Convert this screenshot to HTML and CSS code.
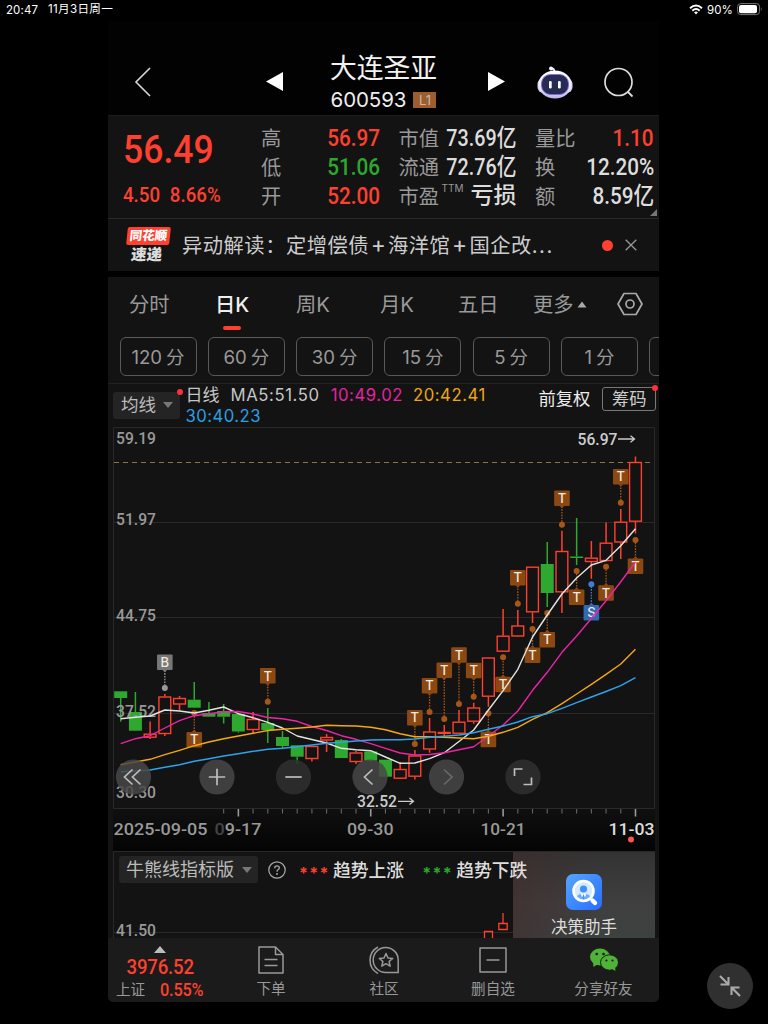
FILE: index.html
```html
<!DOCTYPE html>
<html lang="zh-CN">
<head>
<meta charset="utf-8">
<title>大连圣亚 600593</title>
<link rel="stylesheet" href="styles.css">
</head>
<body>
<div class="status">
  <span class="status-time">20:47</span><span class="status-date">11月3日周一</span>
  <svg class="wifi" width="14" height="11" viewBox="0 0 14 11"><path d="M1 4.2Q7-1.2 13 4.2M3.3 6.7Q7 3.4 10.7 6.7" fill="none" stroke="#fff" stroke-width="1.9"/><path d="M5 8.3Q7 6.8 9 8.3L7 10.5Z" fill="#fff"/></svg>
  <span class="status-pct">90%</span>
  <svg width="26" height="13" viewBox="0 0 26 13"><rect x=".6" y=".6" width="22" height="11" rx="3.2" fill="none" stroke="#777"/><rect x="2" y="2" width="18" height="8.2" rx="2" fill="#fff"/><path d="M24 4.2Q25.6 6.2 24 8.2Z" fill="#777"/></svg>
</div>
<main class="phone">
  <header class="head">
    <svg class="back" width="18" height="30" viewBox="0 0 18 30"><path d="M16 1L2 15L16 29" fill="none" stroke="#d8d8d8" stroke-width="1.6"/></svg>
    <svg class="prev" width="17" height="19" viewBox="0 0 17 19"><path d="M17 0V19L0 9.5Z" fill="#fff"/></svg>
    <div class="title"><h1>大连圣亚</h1><div class="code">600593<span class="badge">L1</span></div></div>
    <svg class="next" width="17" height="19" viewBox="0 0 17 19"><path d="M0 0V19L17 9.5Z" fill="#fff"/></svg>
    <svg class="robot" width="36" height="34" viewBox="0 0 36 34">
      <defs><linearGradient id="rb" x2="0" y2="1"><stop stop-color="#fff"/><stop offset=".65" stop-color="#e5e3f7"/><stop offset="1" stop-color="#b8b5e8"/></linearGradient></defs>
      <path d="M17 6Q18 2.5 14.5 2.5" fill="none" stroke="#ececf7" stroke-width="1.8"/><circle cx="14" cy="2.4" r="2" fill="#f4f4fb"/>
      <rect x=".5" y="12" width="35" height="15" rx="6" fill="#d9d8f2"/><ellipse cx="18" cy="18.500" rx="16.5" ry="14" fill="url(#rb)"/>
      <rect x="4.500" y="8.500" width="27" height="20" rx="9" fill="#252b55" stroke="#8668d8" stroke-width=".9"/>
      <rect x="12" y="15" width="2.7" height="7.500" rx="1.3" fill="#fff"/><rect x="21" y="15" width="2.7" height="7.500" rx="1.3" fill="#fff"/>
    </svg>
    <svg class="search" width="32" height="32" viewBox="0 0 32 32"><circle cx="15.5" cy="15" r="13.5" fill="none" stroke="#ddd" stroke-width="1.7"/><path d="M24.5 24.5L29.5 29.5" stroke="#ddd" stroke-width="1.8"/></svg>
  </header>

  <section class="quote">
    <div class="last red"><div class="price num">56.49</div><div class="change num"><span>4.50</span><span>8.66%</span></div></div>
    <dl class="stats s1">
      <div><dt>高</dt><dd class="num red">56.97</dd></div>
      <div><dt>低</dt><dd class="num green">51.06</dd></div>
      <div><dt>开</dt><dd class="num red">52.00</dd></div>
    </dl>
    <dl class="stats s2">
      <div><dt>市值</dt><dd class="num">73.69亿</dd></div>
      <div><dt>流通</dt><dd class="num">72.76亿</dd></div>
      <div><dt>市盈<sup>TTM</sup></dt><dd class="loss">亏损</dd></div>
    </dl>
    <dl class="stats s3">
      <div><dt>量比</dt><dd class="num red">1.10</dd></div>
      <div><dt>换</dt><dd class="num">12.20%</dd></div>
      <div><dt>额</dt><dd class="num">8.59亿</dd></div>
    </dl>
    <i class="corner"></i>
  </section>

  <section class="news">
    <div class="brand"><b>同花顺</b><em>速递</em></div>
    <p>异动解读：定增偿债<i>+</i>海洋馆<i>+</i>国企改<span>...</span></p>
    <span class="dot"></span>
    <svg width="12" height="12" viewBox="0 0 12 12"><path d="M.7.7L11.3 11.3M11.3.7L.7 11.3" stroke="#999" stroke-width="1.3"/></svg>
  </section>

  <section class="panel">
    <nav class="tabs">
      <span>分时</span><span class="on">日K</span><span>周K</span><span>月K</span><span>五日</span><span class="more">更多<svg width="10" height="7" viewBox="0 0 10 7"><path d="M5 .5L9.5 6.5H.5Z" fill="#aaa"/></svg></span>
      <svg class="hex" width="26" height="24" viewBox="0 0 26 24"><path d="M7 1.5H19L25 12L19 22.500H7L1 12Z" fill="none" stroke="#aaa" stroke-width="1.7" stroke-linejoin="round"/><circle cx="13" cy="12" r="4" fill="none" stroke="#aaa" stroke-width="1.7"/></svg>
    </nav>
    <div class="periods"><span>120<i>分</i></span><span>60<i>分</i></span><span>30<i>分</i></span><span>15<i>分</i></span><span>5<i>分</i></span><span>1<i>分</i></span><span></span></div>
    <div class="ma">
      <div class="select ma-select">均线<i class="caret"></i><i class="pin"></i></div>
      <div class="ma-values"><span class="ma-name">日线</span><span class="m5">MA5:51.50</span><span class="m10">10:49.02</span><span class="m20">20:42.41</span><br><span class="m30">30:40.23</span></div>
      <span class="adj">前复权</span><span class="chips">筹码<i class="pin"></i></span>
    </div>
    <svg id="chart" class="chart" width="551" height="424" viewBox="108 427 551 424"></svg>
    <div class="sub">
      <div class="sub-head">
        <div class="select sub-select">牛熊线指标版<i class="caret"></i></div>
        <svg class="help" width="18" height="18" viewBox="0 0 18 18"><circle cx="9" cy="9" r="8.2" fill="none" stroke="#aaa" stroke-width="1.2"/><path d="M6.7 7.2Q6.700 4.800 9 4.800Q11.300 4.800 11.300 6.800Q11.300 8 10 8.800Q9 9.500 9 10.700" fill="none" stroke="#aaa" stroke-width="1.3"/><circle cx="9" cy="13" r=".9" fill="#aaa"/></svg>
        <span class="stars red">***</span><span class="trend">趋势上涨</span><span class="stars green">***</span><span class="trend t2">趋势下跌</span>
      </div>
      <svg class="sub-chart" width="541" height="86" viewBox="114 852 541 86"><path d="M114 932.500H655" stroke="#292929"/><g fill="none" stroke="#ff402f" stroke-width="1.300"><path d="M503 913V923M498.800 923.500H507.200V929.500H498.800ZM484.500 938V931.500H492.500V938"/></g><text x="116" y="935.5" textLength="40" lengthAdjust="spacingAndGlyphs" class="axis">41.50</text></svg>
      <div class="helper">
        <svg width="36" height="36" viewBox="0 0 36 36"><defs><linearGradient id="hb" x2="1" y2="1"><stop stop-color="#55a5ff"/><stop offset="1" stop-color="#286dff"/></linearGradient><clipPath id="hc"><circle cx="17.500" cy="17" r="8.500"/></clipPath></defs><rect width="36" height="36" rx="7" fill="url(#hb)"/><circle cx="17.500" cy="17" r="10" fill="#d6e9ff" stroke="#fff" stroke-width="2.600"/><circle cx="17.500" cy="15" r="3.600" fill="#3f8fff"/><g clip-path="url(#hc)"><ellipse cx="17.500" cy="24.500" rx="7.500" ry="5" fill="#69adff"/><path d="M14.500 19.500H20.500L17.500 27Z" fill="#fff"/><path d="M17.500 20L19 24L17.500 26L16 24Z" fill="#3f8fff"/></g><path d="M26.500 26.500L29 29" stroke="#fff" stroke-width="4.400" stroke-linecap="round"/></svg>
        <span>决策助手</span>
      </div>
    </div>
  </section>

  <footer class="bar">
    <div class="index"><svg width="12" height="7" viewBox="0 0 12 7"><path d="M6 0L12 7H0Z" fill="#bbb"/></svg><strong class="num red">3976.52</strong><p>上证<b class="num red">0.55%</b></p></div>
    <div class="item order"><svg width="26" height="28" viewBox="0 0 26 28"><path d="M1 1H17.500L25 8.500V27H1ZM17.500 1V8.500H25M6.500 13.500H19.500M6.500 19.500H19.500" fill="none" stroke="#999" stroke-width="1.500" stroke-linejoin="round"/></svg>下单</div>
    <div class="item club"><svg width="30" height="28" viewBox="0 0 30 28"><g fill="none" stroke="#999" stroke-width="1.500"><path d="M17 26.500A12.500 12.500 0 1 1 29.200 14V26.500ZM9 1A15 15 0 0 0 9 27.500"/><path d="M17 7.500L19 12L23.700 12.400L20.100 15.500L21.200 20.200L17 17.700L12.800 20.200L13.900 15.500L10.300 12.400L15 12Z" stroke-linejoin="round"/></g></svg>社区</div>
    <div class="item remove"><svg width="28" height="26" viewBox="0 0 28 26"><path d="M1 1H27V25H1ZM7.500 13H20.500" fill="none" stroke="#999" stroke-width="1.500" stroke-linejoin="round"/></svg>删自选</div>
    <div class="item share"><svg width="28" height="24" viewBox="0 0 28 24"><g fill="#4eb337"><ellipse cx="10" cy="9" rx="10" ry="8.500"/><path d="M3 14L3.500 19L8 16Z"/></g><g fill="#4eb337"><ellipse cx="19.500" cy="14.500" rx="9" ry="7.700" stroke="#1b1b1b"/><path d="M22 21L25.500 23L25 19Z"/></g><g fill="#1b1b1b"><circle cx="6.700" cy="6" r="1.300"/><circle cx="13.500" cy="6" r="1.300"/><circle cx="16.400" cy="12.500" r="1.100"/><circle cx="22.500" cy="12.500" r="1.100"/></g></svg>分享好友</div>
  </footer>
</main>
<div class="shrink"><svg width="24" height="24" viewBox="0 0 24 24"><path d="M2 2L10 10M2.500 10.500H10.500V3M22 22L14 14M21.500 13.500H13.500V21" fill="none" stroke="#aaa" stroke-width="2.100"/></svg></div>
<script src="chart.js"></script>
</body>
</html>
```
FILE: styles.css
```css
* { box-sizing: border-box; }
body { margin: 0; height: 1024px; background: #000; color: #ccc; overflow: hidden; font-family: Inter, "Noto Sans CJK SC", sans-serif; position: relative; }
h1, p, dl, dd { margin: 0; }
i, em { font-style: normal; }
svg { flex: none; display: block; }
span, dt, dd, b { white-space: nowrap; }
.num { font-family: Roboto, "Noto Sans CJK SC", sans-serif; font-weight: 500; }
.red { color: #ff402f !important; }
.green { color: #2da82d !important; }

.status { height: 21px; display: flex; align-items: center; padding: 0 5px 2px 6px; font-size: 11.5px; color: #fff; letter-spacing: .1px; }
.status-date { margin-left: 10px; font-size: 11.6px; letter-spacing: .3px; line-height: 14px; margin-top: -1px; }
.wifi { margin-left: auto; }
.status-pct { margin: 0 4px 0 4px; }

.phone { width: 551px; margin-left: 108px; height: 981px; display: flex; flex-direction: column; }
.head { height: 94px; display: flex; align-items: flex-start; background: #020202; }
.back { margin: 46px 0 0 26px; }
.prev { margin: 51px 0 0 114px; }
.title { width: 205px; padding: 30px 4px 0 0; text-align: center; }
.title h1 { color: #f2f2f2; font-weight: 400; font-size: 26.8px; line-height: 34px; }
.code { height: 27px; display: flex; justify-content: center; align-items: center; color: #eee; font: 20.5px/25px Inter; padding-top: 2px; letter-spacing: -.1px; }
.badge { margin-left: 7px; width: 23px; height: 16px; background: #9c5e2f; color: #c8b9ab; font: 13px/16px Inter; }
.next { margin-top: 51px; }
.robot { margin: 45px 0 0 32px; }
.search { margin: 46px 0 0 30px; }

.quote { height: 104px; display: flex; background: #131313; border-top: 1px solid #1c1c1c; border-bottom: 1px solid #292929; position: relative; }
.last { width: 153px; padding: 11px 0 0 15px; }
.price { font-size: 39.5px; line-height: 46px; transform: scaleX(.9); transform-origin: left; white-space: nowrap; }
.change { display: flex; gap: 11px; font-size: 21px; line-height: 24px; margin-top: 10px; transform: scaleX(.89); transform-origin: left; }
.stats { padding-top: 7px; }
.stats > div { height: 29px; display: flex; justify-content: space-between; align-items: center; }
.stats dt { font-size: 20.3px; line-height: 29px; margin-top: 1px; color: #999; position: relative; }
.stats dd { font-size: 23.5px; line-height: 29px; margin: 1px 0 0 -20px; transform: scaleX(.88); transform-origin: right; color: #ddd; }
.s2 dd { transform: scaleX(.84); }
.stats dd.loss { font-size: 23px; transform: none; font-weight: 500; margin-top: -1px; }
.stats sup { position: absolute; left: 43px; top: 0; font: 10px/12px Inter; }
.s1 { width: 119px; }
.s2 { width: 118px; margin-left: 18.5px; }
.s3 { width: 119px; margin-left: 18.5px; }
.corner { position: absolute; right: 2px; bottom: 2px; border-left: 7px solid transparent; border-bottom: 7px solid #777; }

.news { height: 52px; display: flex; align-items: center; background: #131313; }
.brand { margin-left: 18px; width: 43px; height: 37px; text-align: center; transform: skewX(-6deg); }
.brand b, .brand em { display: block; font-weight: 900; }
.brand b { height: 18px; background: #ff402f; color: #fff; border-radius: 2px; font-size: 12.500px; line-height: 17px; }
.brand em { font-size: 15.500px; line-height: 20px; color: #ddd; }
.news p { margin: 2px 0 0 13px; width: 372px; font-size: 20.300px; line-height: 30px; letter-spacing: .5px; white-space: nowrap; color: #ccc; }
.news p i { display: inline-block; width: 19px; text-align: center; font-size: 23px; line-height: 20px; }
.news p span { letter-spacing: 1.500px; }
.dot { width: 11px; height: 11px; margin-left: 48px; margin-right: 12px; border-radius: 50%; background: #ff402f; }

.panel { margin-top: 6px; height: 661px; background: #131313; overflow: hidden; }
.tabs { height: 60px; display: flex; padding-left: 21px; line-height: 55px; font-size: 20.300px; color: #999; }
.tabs span { width: 80px; }
.tabs .on { width: 81px; margin-left: 6px; color: #eee; font-weight: 500; position: relative; }
.tabs .on::after { content: ""; position: absolute; left: 8px; top: 49px; width: 18px; height: 4px; border-radius: 2px; background: #ff402f; }
.tabs span:nth-child(3) { width: 84px; }
.tabs span:nth-child(4) { width: 78px; }
.tabs span:nth-child(5) { width: 75px; }
.tabs .more { display: flex; align-items: center; height: 55px; width: 84px; gap: 3px; }
.hex { margin-top: 15px; }
.periods { height: 47px; display: flex; gap: 11.300px; padding-left: 11.500px; border-bottom: 1px solid #222; }
.periods span { flex: none; width: 77px; height: 39px; border: 1px solid #595959; border-radius: 6px; color: #999; font-size: 18.600px; line-height: 38px; text-align: center; }
.periods i { margin-left: 4px; font-size: 18.500px; }
.ma { height: 43px; display: flex; align-items: flex-start; }
.select { display: flex; align-items: center; background: #242424; border-radius: 3px; color: #bbb; height: 27px; line-height: 26px; position: relative; }
.caret { border: 5px solid transparent; border-top: 6px solid #777; border-bottom: 0; }
.ma-select { margin: 8px 0 0 5px; width: 67px; padding: 0 0 1px 8px; font-size: 17.500px; gap: 7px; }
.pin { position: absolute; width: 6px; height: 6px; border-radius: 50%; background: #ff2f3c; right: -3px; top: -3px; }
.ma-values { margin-left: 5.5px; width: 353px; padding-top: 1px; font-size: 16.700px; line-height: 20.500px; letter-spacing: .45px; white-space: nowrap; color: #c6c6c6; }
.ma-name { margin-right: 11px; font-size: 17px; letter-spacing: 0; }
.m5 { letter-spacing: .6px; }
.m10 { margin-left: 11px; color: #e3249f; letter-spacing: .55px; }
.m20 { margin-left: 10px; color: #eda612; letter-spacing: .55px; }
.m30 { color: #2d9fe3; }
.adj { color: #eee; font-size: 17.300px; line-height: 29px; }
.chips { margin: 3px 0 0 12px; position: relative; width: 54px; height: 24px; text-align: center; border: 1px solid #777; border-radius: 3px; font-size: 17.300px; line-height: 21px; }
.axis { font: 500 16.500px Roboto; fill: #999; }
.mark { font: 500 13px Inter; fill: #f1e8df; text-anchor: middle; }
.sub { position: relative; height: 87px; margin: 0 4px 0 5px; border: 1px solid #292929; border-bottom: 0; }
.sub-chart { position: absolute; left: 0; top: 0; }
.sub-head { display: flex; position: relative; z-index: 3; height: 35px; align-items: center; padding-left: 5px; }
.sub-select { width: 139px; padding-left: 7px; gap: 8px; font-size: 18px; }
.help { margin-left: 10px; }
.stars { margin: 6px 0 0 13px; font: 700 16px Inter; letter-spacing: 1.300px; width: 27px; }
.trend { margin: -1px 0 0 7px; font-size: 17.800px; font-weight: 500; color: #ddd; }
.sub .green { margin-left: 18px; }
.helper { position: absolute; z-index: 2; right: -1px; top: 0; width: 142px; height: 87px; padding-top: 22px; display: flex; flex-direction: column; align-items: center; gap: 5px; background: linear-gradient(90deg, rgba(65,42,42,.55), transparent 60%), linear-gradient(#333, #403f3f 60%, #3b4240); color: #ddd; font-size: 16.500px; line-height: 25px; }

.bar { height: 64px; display: flex; position: relative; background: #1b1b1b; border-radius: 0 0 5px 5px; color: #999; font-size: 14.600px; }
.index { width: 104px; padding-top: 8px; display: flex; flex-direction: column; align-items: center; }
.index strong { font-size: 20px; line-height: 22px; margin-top: 3px; letter-spacing: -.2px; transform: scaleX(.93); }
.index p { align-self: flex-start; padding-left: 8px; line-height: 24px; display: flex; gap: 15px; white-space: nowrap; }
.index p b { font-size: 17.500px; letter-spacing: -.2px; transform: scaleX(.93); transform-origin: left; }
.item { display: flex; flex-direction: column; align-items: center; line-height: 22px; padding-top: 8px; }
.item svg { margin-bottom: 4px; }
.order { width: 118px; }
.club { width: 108px; }
.remove { width: 110px; }
.remove svg { margin: 1px 0 5px; }
.share { width: 111px; }
.share svg { margin: 2px 0 6px; }
.shrink { position: absolute; left: 707px; top: 963px; width: 46px; height: 46px; border-radius: 50%; background: #303030; display: grid; place-items: center; }
```
FILE: chart.js
```js
// Each candle: colour (r/g), wick top, body top, body bottom, wick bottom
const candles = [
 ['g',691.3,691.3,698,721.7],['g',692,712,730.7,731],['r',721.5,733.7,737.7,739],['r',694,696.5,734,736],
 ['r',696,698,704.5,711],['g',682,699.7,707.7,708],['g',702,713,716.7,717],['g',704,711,716.7,723.5],
 ['g',714,714,731.5,732.7],['r',712,719,730,733],['g',708,723,730,743],['g',731,737,746,748],
 ['g',745,745.3,756.7,763.7],['r',746,746,759,761.5],['r',734,737,740.5,752],['g',739,740,758,758],
 ['r',751,752.5,762,764],['g',751.5,751.5,760.7,762],['g',759.7,759.7,776.7,777],['r',762,769,778.7,779],
 ['r',750,755.5,776.7,779.5],['r',718,731.5,749.5,752.7],['r',725,732,733.7,736],['r',710,721.7,733.7,734],
 ['r',702.7,707.5,721.7,723.7],['r',657,657.5,696.7,706.7],['r',609,635.7,651.7,652],['r',610,625.5,636.5,637],
 ['r',566.7,566.7,612.3,623],['g',542,564,593,607],['r',530.7,551,592.3,613],['g',518,556.5,558,565],
 ['r',541,557.7,562,578.7],['r',522.5,542.7,561,561.5],['r',509,521.7,542.5,559],['r',456.5,462,521.7,533.5]];
const lines = {
 '#e3e3e3':[718.7,717.3,716,710,711,713,710.3,707,713.7,717.7,722.3,728,736,739.5,743,748.3,749.7,750.7,757,763.3,763,758.7,752.7,741.5,730,710,690.7,669.3,637,615,594,578,565,560.3,545.7,528.7],
 '#ed24a6':[743.7,738.7,735.7,728,720.7,715.7,713.7,711.7,711.5,714,717.5,718.7,721.3,726.5,730.5,735.7,739.3,743.7,748.3,753,755,754.5,752.7,749.7,746.7,736,725,711,690.3,672.3,652.3,636,618.5,600.7,581.7,562],
 '#f5a90d':[764.7,762,759.3,754.7,750.3,745.7,742,738.7,736,733.3,730.5,729.3,728.3,727,725.3,725.7,726,727.3,729.7,733.7,736.7,736.7,737.3,738,738.7,736.3,732.3,727.3,719.3,712.7,703.7,694,684.3,674.3,664,649.3],
 '#2da4ed':[771.7,771,770,767.3,764.7,761.3,758.7,756,753.7,751.3,749.3,748.3,746.7,745,743.3,742.3,741,740,739.8,739.7,739,737.3,736.3,735,732.7,729.3,726,722,716.7,713.7,708.3,702.7,697,691.5,685.7,677.7]};
// Trade markers: candle index, label centre y, dot y, letter
const marks = [[3,662.3,688,'B'],[5,739.7,713],[10,675.8,701.7],[20,717.7,744],[21,685.7,712],[22,670.3,719],[23,655,704],[24,670.5,696.7],[25,739.5,713.3],[26,684.5,657.3],[27,577.7,603.7],[28,655.3,629],[29,639.7,613],[30,498.3,524.7],[31,597.3,571],[32,612.7,584.3,'S'],[33,593,566.7],[34,476.7,502.7],[35,566.3,540]];
const X = i => 120.7 + i * 14.708;
let s = '<defs><linearGradient id="ax" x2="0" y2="1"><stop stop-color="#101010"/><stop offset="1" stop-color="#040404"/></linearGradient></defs>';
s += '<rect x="113" y="808" width="542" height="43" fill="url(#ax)"/><path d="M113.500 427.500H654.500V808.500H113.500ZM113.500 522.500H654M113.500 617.500H654M113.500 713.500H654" fill="none" stroke="#292929"/>';
s += '<path d="M114 462.500H654" stroke="#8d7347" stroke-dasharray="5 4"/>';
const txt = (x, y, w, t, c = '#999') => `<text class="axis" x="${x}" y="${y}" textLength="${w}" lengthAdjust="spacingAndGlyphs" style="fill:${c}">${t}</text>`;
candles.forEach(([c, wt, t, b, wb], i) => {
  const x = X(i), col = c === 'r' ? '#ff402f' : '#2fa82f';
  s += `<path d="M${x} ${wt}V${t}M${x} ${b}V${wb}" stroke="${col}" stroke-width="1.5"/>`;
  s += c === 'r' ? `<rect x="${x-5.9}" y="${t+.5}" width="11.800" height="${Math.max(b-t-1,.8)}" fill="none" stroke="${col}" stroke-width="1.400"/>`
    : `<rect x="${x-6.5}" y="${t}" width="13" height="${b-t}" fill="${col}"/>`;
});
s += txt(116,444,40,'59.19') + txt(116,525,40,'51.97') + txt(116,621,40,'44.75') + txt(116,716.5,40,'37.52') + txt(116,797.5,40,'30.30');
marks.forEach(([i, y, d, l = 'T']) => {
  const x = X(i), col = l === 'B' ? '#777' : l === 'S' ? '#3269b0' : '#8c4812', dc = l === 'B' ? '#999' : l === 'S' ? '#3c7dd2' : '#a85617';
  const k = d > y ? 1 : -1;
  s += `<path d="M${x} ${y+8*k}V${d}" stroke="${dc}" stroke-width="1.300" stroke-dasharray="1.600 1.200"/><circle cx="${x}" cy="${d}" r="3" fill="${dc}"/><rect x="${x-7.800}" y="${y-7.800}" width="15.600" height="15.600" rx="1" fill="${col}"/><path d="M${x-2.500} ${y+7.500*k}H${x+2.500}L${x} ${y+10*k}Z" fill="${col}"/><text class="mark" x="${x}" y="${y+4.700}">${l}</text>`;
});
for (const [c, p] of Object.entries(lines)) s += `<polyline points="${p.map((y,i)=>X(i)+','+y).join(' ')}" fill="none" stroke="${c}" stroke-width="1.400" stroke-linejoin="round"/>`;
const icons = ['M132.500 769.500L124.500 777L132.500 784.500M140.500 769.500L132.500 777L140.500 784.500','M208.800 777H225.200M217 768.800V785.200','M285.300 777H301.700','M372.500 769.500L364.500 777L372.500 784.500','M444 769.500L452 777L444 784.500','M514.500 776V769H522.500M531.500 777.500V784.500H523.500'];
[133.5,217,293.5,370,446.5,523].forEach((x, i) => {
  s += `<circle cx="${x}" cy="777" r="17.600" fill="${[2,5].includes(i)?'#303030':'#484848'}" fill-opacity=".84"/><path d="${icons[i]}" fill="none" stroke="${i===4?'#696969':'#bdbdbd'}" stroke-width="1.700"/>`;
});
s += txt(577.5,445,40,'56.97','#ccc') + txt(357,807,40,'32.52','#ccc');
s += '<path d="M618 439H634M630.500 435.700L634.500 439L630.500 442.300M398 801.300H413M409.500 798L413.500 801.300L409.500 804.600" fill="none" stroke="#ccc" stroke-width="1.300"/>';
for (let i = 7; i < 36; i++) { const m = i % 9 === 8; s += `<path d="M${X(i)} 809V${m?816.500:813.500}" stroke="${m?'#999':'#666'}" stroke-width="${m?1.600:1.100}"/>`; }
s += txt(113.5,835,94,'2025-09-05') + txt(214.5,835,47,'<tspan fill="#444">0</tspan>9-17') + txt(347,835,46.5,'09-30') + txt(480.500,835,45,'10-21') + txt(608.500,835,46,'11-03','#ddd');
s += '<circle cx="631" cy="839.500" r="3" fill="#ff5252"/>';
document.getElementById('chart').innerHTML = s;
```
